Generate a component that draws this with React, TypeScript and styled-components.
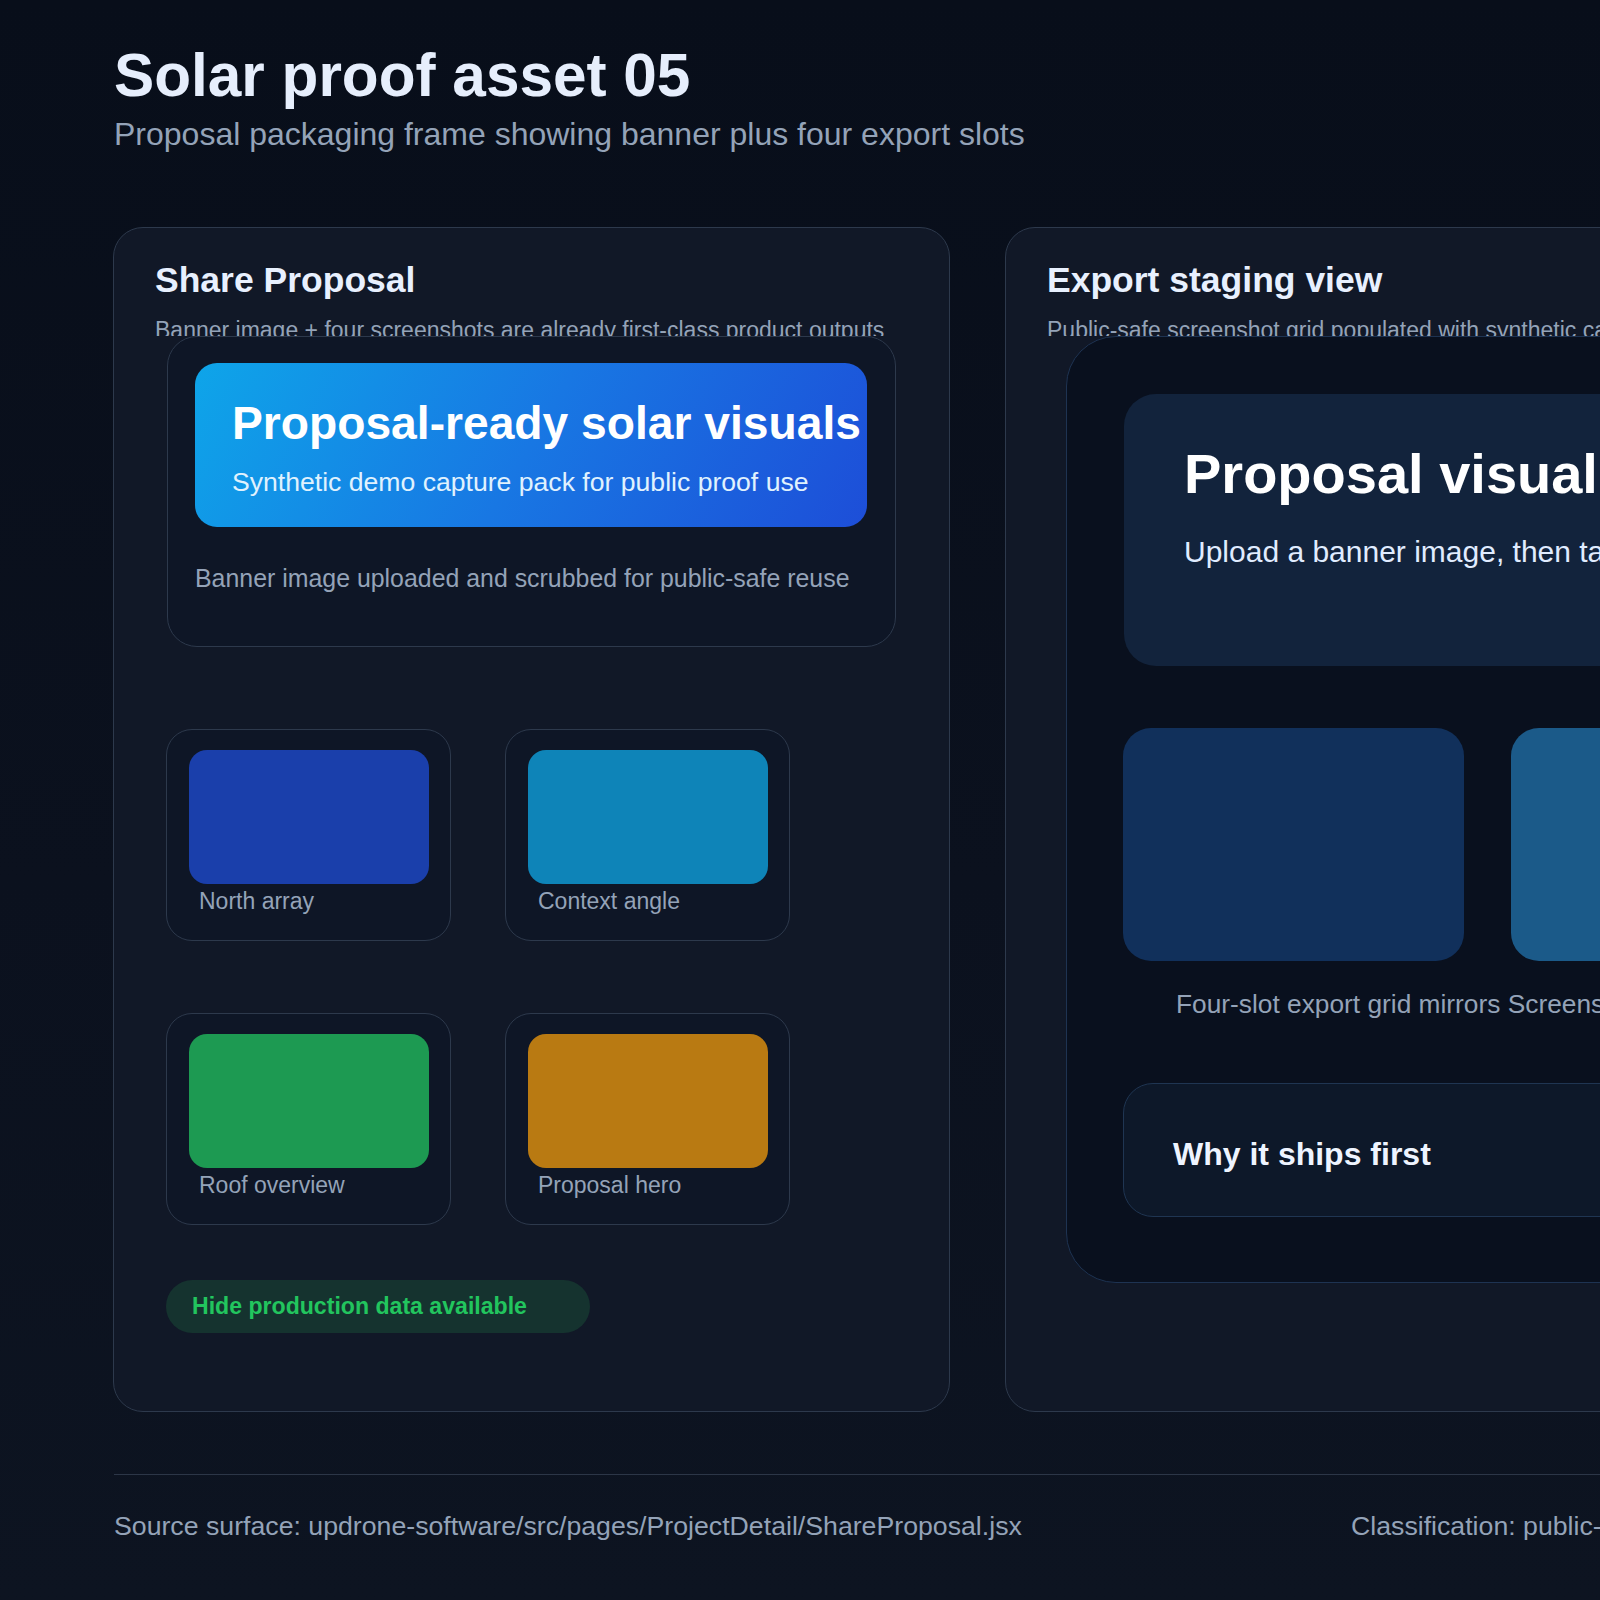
import React from "react";
import styled, { createGlobalStyle } from "styled-components";

const GlobalStyle = createGlobalStyle`
  html, body {
    margin: 0;
    padding: 0;
    background: #0a101c;
    overflow: hidden;
  }
  body {
    font-family: "Liberation Sans", Arial, Helvetica, sans-serif;
    -webkit-font-smoothing: antialiased;
  }
  * { box-sizing: border-box; }
`;

const Page = styled.div`
  width: 2000px;
  min-height: 1600px;
  padding: 42px 112px 0 114px;
  background: linear-gradient(180deg, #080e1a 0%, #0b111e 55%, #0d1421 100%);
`;

const PageTitle = styled.h1`
  margin: 0;
  font-size: 60.3px;
  line-height: 66px;
  font-weight: 700;
  color: #e6eefc;
`;

const PageSubtitle = styled.p`
  margin: 8px 0 0;
  font-size: 32px;
  line-height: 36px;
  color: #94a3b8;
`;

const Columns = styled.div`
  display: grid;
  grid-template-columns: 837px 1100px;
  column-gap: 55px;
  margin-top: 75px;
  margin-left: -1px;
`;

const Card = styled.section`
  border: 1px solid #2d394c;
  border-radius: 30px;
  background: #111827;
  overflow: hidden;
  height: 1185px;
`;

const CardHeader = styled.header`
  height: 108px;
  overflow: hidden;
  padding: 32px 41px 0;
`;

const CardTitle = styled.h2`
  margin: 0;
  font-size: 35.5px;
  line-height: 40px;
  font-weight: 700;
  color: #e8f0fe;
`;

const CardSubtitle = styled.p`
  margin: 16px 0 0;
  font-size: 23px;
  line-height: 28px;
  color: #94a3b8;
  white-space: nowrap;
`;

const CardBody = styled.div<{ $padLeft: number }>`
  padding: 0 53px 0 ${(p) => p.$padLeft}px;
`;

const BannerBox = styled.div`
  height: 311px;
  border: 1px solid #2d394c;
  border-radius: 30px;
  background: #0e1626;
  padding: 26px 28px 0 27px;
`;

const Banner = styled.div`
  height: 164px;
  border-radius: 22px;
  background: linear-gradient(120deg, #0ea5e9 0%, #1877e3 50%, #1d4ed8 100%);
  padding: 34px 0 0 37px;
  overflow: hidden;
`;

const BannerTitle = styled.div`
  font-size: 46.2px;
  line-height: 52px;
  font-weight: 700;
  color: #ffffff;
  white-space: nowrap;
`;

const BannerSubtitle = styled.div`
  margin-top: 17px;
  font-size: 26.6px;
  line-height: 32px;
  color: #e0f2fe;
  white-space: nowrap;
`;

const BannerCaption = styled.p`
  margin: 36px 0 0;
  font-size: 24.9px;
  line-height: 30px;
  color: #94a3b8;
  white-space: nowrap;
`;

const ThumbGrid = styled.div`
  display: grid;
  grid-template-columns: 285px 285px;
  column-gap: 54px;
  row-gap: 72px;
  margin-top: 82px;
  margin-left: -1px;
`;

const ThumbCard = styled.div`
  height: 212px;
  border: 1px solid #2d394c;
  border-radius: 26px;
  background: #0e1626;
  padding: 20px 21px 0 22px;
`;

const Thumb = styled.div<{ $color: string }>`
  height: 134px;
  border-radius: 18px;
  background: ${(p) => p.$color};
`;

const ThumbLabel = styled.div`
  margin-top: 3px;
  padding-left: 10px;
  font-size: 23px;
  line-height: 28px;
  color: #94a3b8;
`;

const Badge = styled.div`
  display: flex;
  align-items: center;
  width: 424px;
  height: 53px;
  margin-top: 55px;
  margin-left: -1px;
  padding-left: 26px;
  border-radius: 27px;
  background: #15332f;
  color: #22c55e;
  font-size: 23.1px;
  font-weight: 700;
`;

const StageBox = styled.div`
  height: 947px;
  border: 1px solid #1e3352;
  border-radius: 50px;
  background: #09101e;
  padding: 57px 0 0 57px;
`;

const Hero = styled.div`
  height: 272px;
  border-radius: 32px;
  background: #12233c;
  padding: 49px 0 0 60px;
  overflow: hidden;
`;

const HeroTitle = styled.div`
  font-size: 56px;
  line-height: 62px;
  font-weight: 700;
  color: #ffffff;
  white-space: nowrap;
`;

const HeroSubtitle = styled.div`
  margin-top: 30px;
  font-size: 30px;
  line-height: 34px;
  color: #e0ecff;
  white-space: nowrap;
`;

const TileRow = styled.div`
  display: flex;
  gap: 47px;
  margin-top: 62px;
  margin-left: -1px;
`;

const Tile = styled.div<{ $color: string }>`
  flex: 0 0 341px;
  height: 233px;
  border-radius: 28px;
  background: ${(p) => p.$color};
`;

const TileCaption = styled.p`
  margin: 27px 0 0;
  padding-left: 52px;
  font-size: 26.3px;
  line-height: 32px;
  color: #94a3b8;
  white-space: nowrap;
`;

const WhyBox = styled.div`
  height: 134px;
  margin-top: 63px;
  margin-left: -1px;
  border: 1px solid #1f3552;
  border-radius: 30px;
  background: #0d1829;
  padding: 51px 0 0 49px;
`;

const WhyTitle = styled.div`
  font-size: 32px;
  line-height: 38px;
  font-weight: 700;
  color: #eef4ff;
  white-space: nowrap;
`;

const Footer = styled.footer`
  margin-top: 62px;
  border-top: 1px solid #2c3647;
  padding-top: 35px;
  display: grid;
  grid-template-columns: 1237px auto;
`;

const FooterText = styled.span`
  font-size: 26.7px;
  line-height: 32px;
  color: #94a3b8;
  white-space: nowrap;
`;

const thumbs = [
  { label: "North array", color: "#1a3fab" },
  { label: "Context angle", color: "#0e84b8" },
  { label: "Roof overview", color: "#1d9a52" },
  { label: "Proposal hero", color: "#b97a12" },
];

export default function App() {
  return (
    <>
      <GlobalStyle />
      <Page>
        <PageTitle>Solar proof asset 05</PageTitle>
        <PageSubtitle>Proposal packaging frame showing banner plus four export slots</PageSubtitle>

        <Columns>
          <Card>
            <CardHeader>
              <CardTitle>Share Proposal</CardTitle>
              <CardSubtitle>Banner image + four screenshots are already first-class product outputs</CardSubtitle>
            </CardHeader>
            <CardBody $padLeft={53}>
              <BannerBox>
                <Banner>
                  <BannerTitle>Proposal-ready solar visuals</BannerTitle>
                  <BannerSubtitle>Synthetic demo capture pack for public proof use</BannerSubtitle>
                </Banner>
                <BannerCaption>Banner image uploaded and scrubbed for public-safe reuse</BannerCaption>
              </BannerBox>
              <ThumbGrid>
                {thumbs.map((t) => (
                  <ThumbCard key={t.label}>
                    <Thumb $color={t.color} />
                    <ThumbLabel>{t.label}</ThumbLabel>
                  </ThumbCard>
                ))}
              </ThumbGrid>
              <Badge>Hide production data available</Badge>
            </CardBody>
          </Card>

          <Card>
            <CardHeader>
              <CardTitle>Export staging view</CardTitle>
              <CardSubtitle>Public-safe screenshot grid populated with synthetic captures</CardSubtitle>
            </CardHeader>
            <CardBody $padLeft={60}>
              <StageBox>
                <Hero>
                  <HeroTitle>Proposal visuals</HeroTitle>
                  <HeroSubtitle>Upload a banner image, then tag four screenshots for export</HeroSubtitle>
                </Hero>
                <TileRow>
                  <Tile $color="#11305b" />
                  <Tile $color="#1b5a89" />
                </TileRow>
                <TileCaption>Four-slot export grid mirrors Screenshot slots in the proposal</TileCaption>
                <WhyBox>
                  <WhyTitle>Why it ships first</WhyTitle>
                </WhyBox>
              </StageBox>
            </CardBody>
          </Card>
        </Columns>

        <Footer>
          <FooterText>Source surface: updrone-software/src/pages/ProjectDetail/ShareProposal.jsx</FooterText>
          <FooterText>Classification: public-safe synthetic</FooterText>
        </Footer>
      </Page>
    </>
  );
}
